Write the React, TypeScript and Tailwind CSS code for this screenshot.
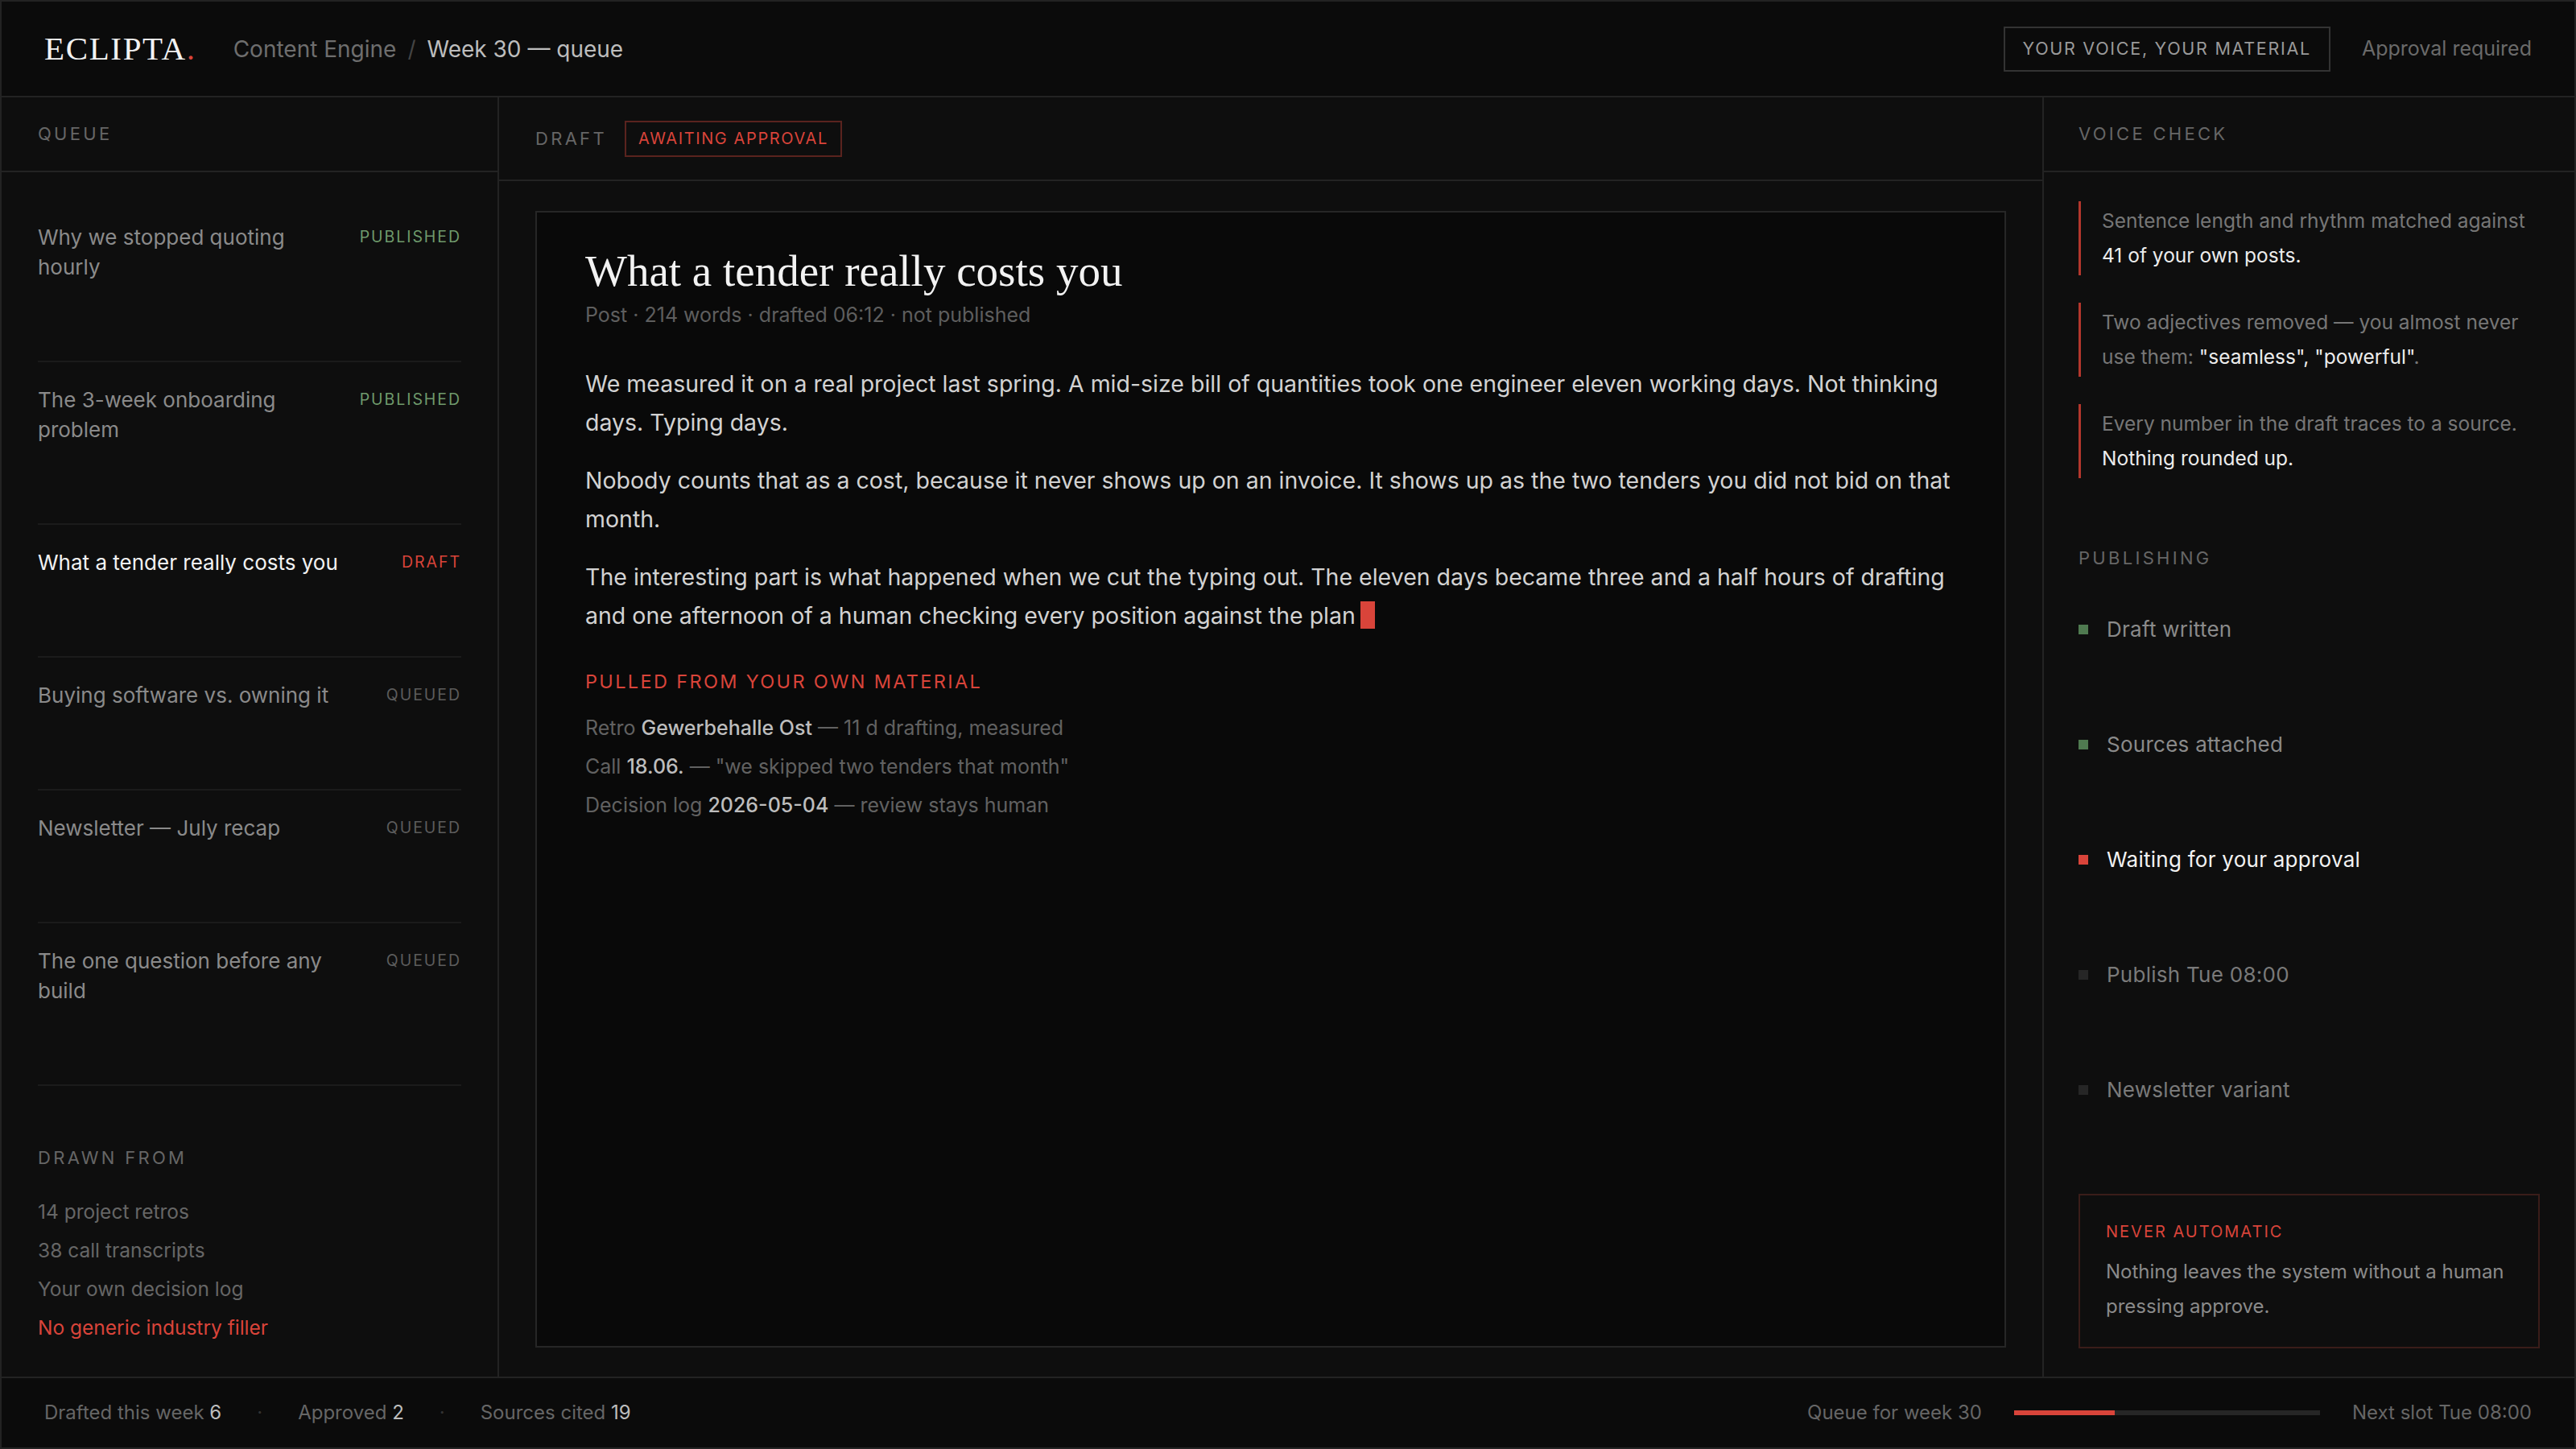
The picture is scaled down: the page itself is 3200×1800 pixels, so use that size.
import React from 'react';

type Status = 'PUBLISHED' | 'DRAFT' | 'QUEUED';

const queue: Array<{ title: string; status: Status; active?: boolean }> = [
  { title: 'Why we stopped quoting hourly', status: 'PUBLISHED' },
  { title: 'The 3-week onboarding problem', status: 'PUBLISHED' },
  { title: 'What a tender really costs you', status: 'DRAFT', active: true },
  { title: 'Buying software vs. owning it', status: 'QUEUED' },
  { title: 'Newsletter — July recap', status: 'QUEUED' },
  { title: 'The one question before any build', status: 'QUEUED' },
];

const statusColor: Record<Status, string> = {
  PUBLISHED: 'text-[#6f9a6c]',
  DRAFT: 'text-[#d9443a]',
  QUEUED: 'text-[#5c5c5c]',
};

const steps = [
  { label: 'Draft written', dot: 'bg-[#4f7a50]', text: 'text-[#8a8a8a]' },
  { label: 'Sources attached', dot: 'bg-[#4f7a50]', text: 'text-[#8a8a8a]' },
  { label: 'Waiting for your approval', dot: 'bg-[#d9443a]', text: 'text-[#f2f2f2]' },
  { label: 'Publish Tue 08:00', dot: 'bg-[#262626]', text: 'text-[#7a7a7a]' },
  { label: 'Newsletter variant', dot: 'bg-[#262626]', text: 'text-[#7a7a7a]' },
];

function SectionLabel({ children }: { children: React.ReactNode }) {
  return <div className="text-[22px] uppercase tracking-[0.15em] text-[#666]">{children}</div>;
}

export default function App() {
  return (
    <div className="flex h-[1800px] w-[3200px] flex-col overflow-hidden border-2 border-[#232323] bg-[#0e0e0e] font-['Inter',sans-serif] text-[#8a8a8a]">
      {/* Top bar */}
      <header className="flex h-[119px] shrink-0 items-center border-b-2 border-[#232323] bg-[#0b0b0b] px-[53px]">
        <div className="font-['Liberation_Serif',serif] text-[41px] tracking-[0.04em] text-[#f2f2f2]">
          ECLIPTA<span className="text-[#d9443a]">.</span>
        </div>
        <div className="ml-[46px] flex items-center gap-[14px] text-[28px]">
          <span className="text-[#6e6e6e]">Content Engine</span>
          <span className="text-[#444]">/</span>
          <span className="text-[#bdbdbd]">Week 30 — queue</span>
        </div>
        <div className="ml-auto flex items-center gap-[39px]">
          <div className="flex h-[56px] items-center border-2 border-[#333] px-[22px] text-[21.5px] uppercase tracking-[0.08em] text-[#9a9a9a]">
            Your voice, your material
          </div>
          <span className="text-[25px] text-[#6a6a6a]">Approval required</span>
        </div>
      </header>

      <div className="flex min-h-0 flex-1">
        {/* Queue */}
        <aside className="flex w-[618px] shrink-0 flex-col border-r-2 border-[#232323]">
          <div className="flex h-[93px] shrink-0 items-center border-b-2 border-[#232323] px-[45px]">
            <SectionLabel>Queue</SectionLabel>
          </div>
          <div className="px-[45px] pt-[34px]">
            {queue.map((q) => (
              <div key={q.title} className="flex justify-between gap-5 border-b-2 border-[#1b1b1b] pb-[98px] pt-7">
                <div className={`flex-1 text-[26px] leading-[37px] ${q.active ? 'text-[#f2f2f2]' : 'text-[#8a8a8a]'}`}>
                  {q.title}
                </div>
                <div className={`shrink-0 text-[19.5px] leading-[37px] tracking-[0.1em] ${statusColor[q.status]}`}>
                  {q.status}
                </div>
              </div>
            ))}
          </div>
          <div className="mt-auto px-[45px] pb-[37px]">
            <SectionLabel>Drawn from</SectionLabel>
            <div className="mt-[26px] flex flex-col text-[24.5px] leading-[48px] text-[#666]">
              <span>14 project retros</span>
              <span>38 call transcripts</span>
              <span>Your own decision log</span>
              <span className="text-[#d9443a]">No generic industry filler</span>
            </div>
          </div>
        </aside>

        {/* Draft */}
        <main className="flex min-w-0 flex-1 flex-col">
          <div className="flex h-[104px] shrink-0 items-center gap-[22px] border-b-2 border-[#232323] px-[45px]">
            <SectionLabel>Draft</SectionLabel>
            <div className="flex h-[45px] items-center border-2 border-[#5a231e] px-[15px] text-[20px] uppercase tracking-[0.08em] text-[#d9443a]">
              Awaiting approval
            </div>
          </div>
          <div className="flex min-h-0 flex-1 flex-col px-[45px] pb-[36px] pt-[37px]">
            <div className="flex-1 border-2 border-[#262626] bg-[#090909] px-[60px] pt-[42px]">
              <h1 className="font-['Liberation_Serif',serif] text-[55px] leading-[62px] text-[#f2f2f2]">
                What a tender really costs you
              </h1>
              <div className="mt-[6px] text-[25px] leading-[34px] text-[#5e5e5e]">
                Post · 214 words · drafted 06:12 · not published
              </div>
              <div className="mt-[45px] flex flex-col gap-[24px] text-[28.5px] leading-[48px] text-[#d2d2d2]">
                <p>
                  We measured it on a real project last spring. A mid-size bill of quantities took one engineer eleven
                  working days. Not thinking days. Typing days.
                </p>
                <p>
                  Nobody counts that as a cost, because it never shows up on an invoice. It shows up as the two tenders
                  you did not bid on that month.
                </p>
                <p>
                  The interesting part is what happened when we cut the typing out. The eleven days became three and a
                  half hours of drafting and one afternoon of a human checking every position against the plan
                  <span className="ml-[6px] inline-block h-[34px] w-[18px] translate-y-[6px] bg-[#d9443a]" />
                </p>
              </div>
              <div className="mt-[43px] text-[23.5px] leading-[30px] uppercase tracking-[0.1em] text-[#d9443a]">
                Pulled from your own material
              </div>
              <div className="mt-[18px] flex flex-col text-[25px] leading-[48px] text-[#616161]">
                <span>
                  Retro <b className="font-medium text-[#bdbdbd]">Gewerbehalle Ost</b> — 11 d drafting, measured
                </span>
                <span>
                  Call <b className="font-medium text-[#bdbdbd]">18.06.</b> — "we skipped two tenders that month"
                </span>
                <span>
                  Decision log <b className="font-medium text-[#bdbdbd]">2026-05-04</b> — review stays human
                </span>
              </div>
            </div>
          </div>
        </main>

        {/* Voice check */}
        <aside className="flex w-[661px] shrink-0 flex-col border-l-2 border-[#232323]">
          <div className="flex h-[93px] shrink-0 items-center border-b-2 border-[#232323] px-[43px]">
            <SectionLabel>Voice check</SectionLabel>
          </div>
          <div className="flex flex-1 flex-col px-[43px] pb-[35px] pt-[36px]">
            <div className="flex flex-col gap-[34px] text-[24.5px] leading-[43px] text-[#767676]">
              <div className="border-l-[3px] border-[#b3362c] py-[3px] pl-[26px]">
                Sentence length and rhythm matched against{' '}
                <span className="text-[#ececec]">41 of your own posts.</span>
              </div>
              <div className="border-l-[3px] border-[#b3362c] py-[3px] pl-[26px]">
                Two adjectives removed — you almost never use them:{' '}
                <span className="text-[#ececec]">"seamless", "powerful"</span>.
              </div>
              <div className="border-l-[3px] border-[#b3362c] py-[3px] pl-[26px]">
                Every number in the draft traces to a source.{' '}
                <span className="text-[#ececec]">Nothing rounded up.</span>
              </div>
            </div>

            <div className="mt-[83px]">
              <SectionLabel>Publishing</SectionLabel>
            </div>
            <div className="flex flex-col">
              {steps.map((s) => (
                <div key={s.label} className="flex h-[143px] items-center gap-[23px]">
                  <span className={`h-[12px] w-[12px] shrink-0 ${s.dot}`} />
                  <span className={`text-[26px] tracking-[0.01em] ${s.text}`}>{s.label}</span>
                </div>
              ))}
            </div>

            <div className="mt-auto border-2 border-[#3a1d19] px-[32px] pb-[29px] pt-[31px]">
              <div className="text-[20px] leading-[28px] uppercase tracking-[0.1em] text-[#d9443a]">
                Never automatic
              </div>
              <div className="mt-[14px] text-[24px] leading-[43px] text-[#8a8a8a]">
                Nothing leaves the system without a human pressing approve.
              </div>
            </div>
          </div>
        </aside>
      </div>

      {/* Footer */}
      <footer className="flex h-[88px] shrink-0 items-center border-t-2 border-[#232323] bg-[#0b0b0b] px-[53px] text-[24px] text-[#666]">
        <div className="flex items-center gap-[44px]">
          <span>
            Drafted this week <span className="text-[#bdbdbd]">6</span>
          </span>
          <span className="text-[#333]">·</span>
          <span>
            Approved <span className="text-[#bdbdbd]">2</span>
          </span>
          <span className="text-[#333]">·</span>
          <span>
            Sources cited <span className="text-[#bdbdbd]">19</span>
          </span>
        </div>
        <div className="ml-auto flex items-center gap-[40px]">
          <span>Queue for week 30</span>
          <div className="flex h-[6px] w-[380px] bg-[#262626]">
            <div className="h-full bg-[#d9443a]" style={{ width: '33%' }} />
          </div>
          <span>Next slot Tue 08:00</span>
        </div>
      </footer>
    </div>
  );
}
